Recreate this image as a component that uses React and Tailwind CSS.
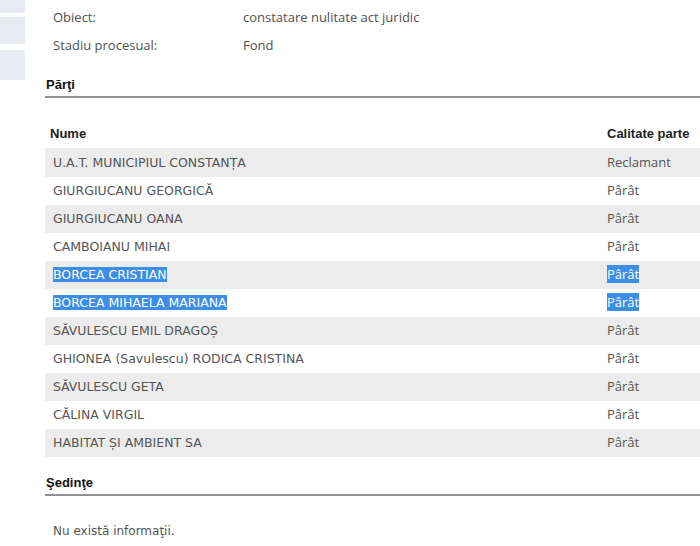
import React from 'react';

const parti = [
  { nume: 'U.A.T. MUNICIPIUL CONSTANȚA', calitate: 'Reclamant' },
  { nume: 'GIURGIUCANU GEORGICĂ', calitate: 'Pârât' },
  { nume: 'GIURGIUCANU OANA', calitate: 'Pârât' },
  { nume: 'CAMBOIANU MIHAI', calitate: 'Pârât' },
  { nume: 'BORCEA CRISTIAN', calitate: 'Pârât', selected: true },
  { nume: 'BORCEA MIHAELA MARIANA', calitate: 'Pârât', selected: true },
  { nume: 'SĂVULESCU EMIL DRAGOȘ', calitate: 'Pârât' },
  { nume: 'GHIONEA (Savulescu) RODICA CRISTINA', calitate: 'Pârât' },
  { nume: 'SĂVULESCU GETA', calitate: 'Pârât' },
  { nume: 'CĂLINA VIRGIL', calitate: 'Pârât' },
  { nume: 'HABITAT ȘI AMBIENT SA', calitate: 'Pârât' },
];

function Sel({ on, children }) {
  if (!on) return children;
  return <span className="bg-[#3d8ee6] text-white">{children}</span>;
}

function SectionTitle({ children }) {
  return (
    <div className="h-[25px] flex items-center border-b-2 border-[#8f8f8f] pl-px text-[13px] font-bold text-[#111] font-['Liberation_Sans',Arial,sans-serif]">
      {children}
    </div>
  );
}

export default function App() {
  return (
    <div className="w-[700px] h-[546px] overflow-hidden bg-white flex">
      <div className="w-[25px] flex flex-col shrink-0">
        <div className="h-[13px] bg-[#e7eaf0]" />
        <div className="h-[27px] mt-[4px] bg-[#e7eaf0]" />
        <div className="h-[30px] mt-[6px] bg-[#e7eaf0]" />
      </div>
      <div className="flex-1 pl-[20px]">
        <div className="pt-[4px] font-['Open_Sans',sans-serif] text-[13px] text-[#505050]">
          <div className="h-[28px] flex items-center">
            <span className="w-[198px] pl-[8px]">Obiect:</span>
            <span>constatare nulitate act juridic</span>
          </div>
          <div className="h-[28px] flex items-center">
            <span className="w-[198px] pl-[8px]">Stadiu procesual:</span>
            <span>Fond</span>
          </div>
        </div>
        <div className="mt-[13px]">
          <SectionTitle>Părţi</SectionTitle>
        </div>
        <div className="mt-[21px] h-[30px] flex items-center border-b border-[#ececec] font-['Liberation_Sans',Arial,sans-serif] text-[13px] font-bold text-[#222]">
          <span className="flex-1 pl-[5px]">Nume</span>
          <span className="w-[93px]">Calitate parte</span>
        </div>
        <div>
          {parti.map((p, i) => (
            <div key={i} className={`h-[28px] flex items-center ${i % 2 === 0 ? 'bg-[#ececec]' : 'bg-white'}`}>
              <span className="flex-1 pl-[8px] font-['DejaVu_Sans',Verdana,sans-serif] text-[12.5px] text-[#555]">
                <Sel on={p.selected}>{p.nume}</Sel>
              </span>
              <span className="w-[93px] font-['Open_Sans',sans-serif] text-[13px] text-[#555]">
                <Sel on={p.selected}>{p.calitate}</Sel>
              </span>
            </div>
          ))}
        </div>
        <div className="mt-[14px]">
          <SectionTitle>Şedinţe</SectionTitle>
        </div>
        <div className="mt-[26px] pl-[8px] font-['DejaVu_Sans',Verdana,sans-serif] text-[12px] text-[#555]">
          Nu există informaţii.
        </div>
      </div>
    </div>
  );
}
